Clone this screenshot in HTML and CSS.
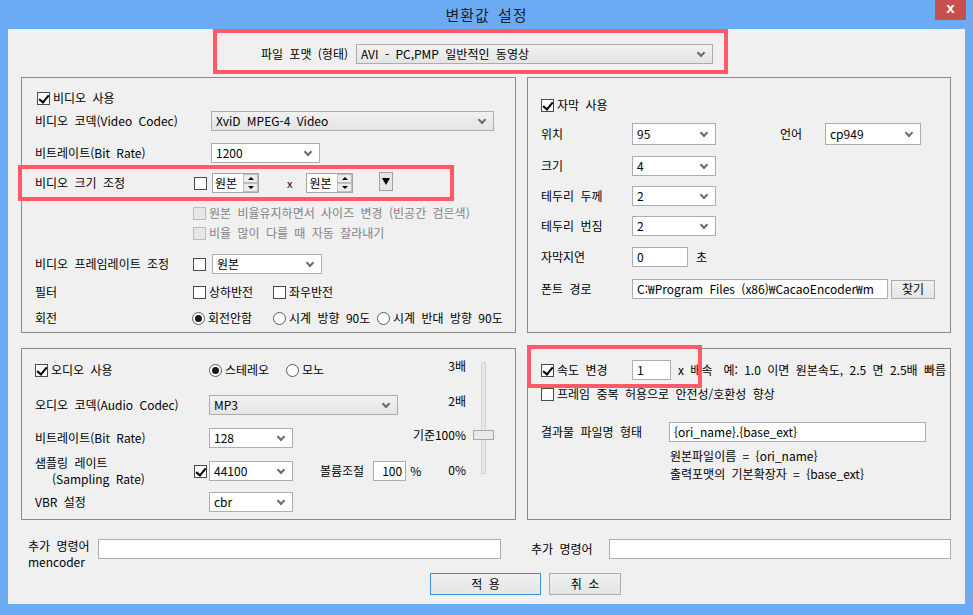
FILE: index.html
```html
<!DOCTYPE html>
<html lang="ko">
<head>
    <meta charset="UTF-8">
    <title>변환값 설정</title>
    <link rel="stylesheet" href="styles.css">
</head>
<body>

<div class="window">

    <!-- Title bar -->
    <div class="titlebar">
        <span class="title">변환값 설정</span>
        <span class="close">X</span>
    </div>

    <div class="client">

        <!-- File format -->
        <div class="format-box">
            <span>파일 포맷 (형태)</span>
            <div class="combo gray w-format">AVI - PC,PMP 일반적인 동영상</div>
        </div>

        <div class="groups">

            <!-- Video -->
            <div class="group video">
                <div class="row indent2"><span class="cb on"></span>비디오 사용</div>
                <div class="row m1">
                    <span class="lbl">비디오 코덱(Video Codec)</span>
                    <div class="combo gray ml18 w283">XviD MPEG-4 Video</div>
                </div>
                <div class="row m10">
                    <span class="lbl">비트레이트(Bit Rate)</span>
                    <div class="combo ml18 w109">1200</div>
                </div>
                <div class="row m8">
                    <span class="lbl">비디오 크기 조정</span>
                    <span class="cb ml1 mr5"></span>
                    <div class="spin"><span class="val">원본</span><span class="spin-btns"><i class="up"></i><i class="down"></i></span></div>
                    <span class="times">x</span>
                    <div class="spin"><span class="val">원본</span><span class="spin-btns"><i class="up"></i><i class="down"></i></span></div>
                    <span class="drop-btn"></span>
                </div>
                <div class="row short m9 disabled"><span class="cb dis"></span>원본 비율유지하면서 사이즈 변경 (빈공간 검은색)</div>
                <div class="row short disabled"><span class="cb dis"></span>비율 많이 다를 때 자동 잘라내기</div>
                <div class="row m10">
                    <span class="lbl">비디오 프레임레이트 조정</span>
                    <span class="cb mr6"></span>
                    <div class="combo w110">원본</div>
                </div>
                <div class="row m6">
                    <span class="lbl">필터</span>
                    <span class="opt w80"><span class="cb"></span>상하반전</span>
                    <span class="opt"><span class="cb"></span>좌우반전</span>
                </div>
                <div class="row m4">
                    <span class="lbl narrow">회전</span>
                    <span class="opt w81"><span class="radio on"></span>회전안함</span>
                    <span class="opt w104"><span class="radio"></span>시계 방향 90도</span>
                    <span class="opt"><span class="radio"></span>시계 반대 방향 90도</span>
                </div>
                <div class="mark mark-size"></div>
            </div>

            <!-- Subtitle -->
            <div class="group subtitle">
                <div class="row"><span class="cb on"></span>자막 사용</div>
                <div class="row m7">
                    <span class="lbl">위치</span>
                    <div class="combo tall w84">95</div>
                    <span class="lbl lang">언어</span>
                    <div class="combo tall w96">cp949</div>
                </div>
                <div class="row m10">
                    <span class="lbl">크기</span>
                    <div class="combo w84">4</div>
                </div>
                <div class="row m8">
                    <span class="lbl">테두리 두께</span>
                    <div class="combo w84">2</div>
                </div>
                <div class="row m8">
                    <span class="lbl">테두리 번짐</span>
                    <div class="combo w84">2</div>
                </div>
                <div class="row m9">
                    <span class="lbl">자막지연</span>
                    <div class="input w56">0</div>
                    <span class="ml8">초</span>
                </div>
                <div class="row m10">
                    <span class="lbl">폰트 경로</span>
                    <div class="input w256">C:₩Program Files (x86)₩CacaoEncoder₩m</div>
                    <div class="btn find">찾기</div>
                </div>
            </div>

            <!-- Audio -->
            <div class="group audio">
                <div class="audio-main">
                    <div class="row">
                        <span class="opt w174"><span class="cb on"></span>오디오 사용</span>
                        <span class="opt w77"><span class="radio on"></span>스테레오</span>
                        <span class="opt"><span class="radio"></span>모노</span>
                    </div>
                    <div class="row m13">
                        <span class="lbl">오디오 코덱(Audio Codec)</span>
                        <div class="combo gray w189">MP3</div>
                    </div>
                    <div class="row m11">
                        <span class="lbl">비트레이트(Bit Rate)</span>
                        <div class="combo w84">128</div>
                    </div>
                    <div class="row tall-row m6">
                        <span class="lbl two-line">샘플링 레이트<br><span class="sub">(Sampling Rate)</span></span>
                        <span class="cb on mr2"></span>
                        <div class="combo w84">44100</div>
                        <span class="vol-lbl">볼륨조절</span>
                        <div class="input w33 num">100</div>
                        <span class="ml4">%</span>
                    </div>
                    <div class="row m4">
                        <span class="lbl">VBR 설정</span>
                        <div class="combo w84">cbr</div>
                    </div>
                </div>
                <div class="vol">
                    <div class="ticks">
                        <span>3배</span>
                        <span>2배</span>
                        <span>기준100%</span>
                        <span>0%</span>
                    </div>
                    <div class="track">
                        <span class="groove"></span>
                        <span class="thumb"></span>
                    </div>
                </div>
            </div>

            <!-- Speed / output name -->
            <div class="group speed">
                <div class="row">
                    <span class="opt w91"><span class="cb on"></span>속도 변경</span>
                    <div class="input w39">1</div>
                    <span class="ml7">x 배속</span>
                    <span class="ml11">예: 1.0 이면 원본속도, 2.5 면 2.5배 빠름</span>
                </div>
                <div class="row m2"><span class="cb"></span>프레임 중복 허용으로 안전성/호환성 향상</div>
                <div class="row m16">
                    <span class="lbl">결과물 파일명 형태</span>
                    <div class="input w257">{ori_name}.{base_ext}</div>
                </div>
                <div class="info">
                    원본파일이름 = {ori_name}<br>
                    출력포맷의 기본확장자 = {base_ext}
                </div>
                <div class="mark mark-speed"></div>
            </div>
        </div>

        <!-- Extra commands -->
        <div class="extra">
            <div class="extra-lbl">추가 명령어<br>mencoder</div>
            <div class="input w403"></div>
            <div class="extra-lbl2">추가 명령어</div>
            <div class="input w342"></div>
        </div>

        <div class="buttons">
            <div class="btn ok">적 용</div>
            <div class="btn cancel">취 소</div>
        </div>
    </div>
</div>

</body>
</html>
```

FILE: styles.css
```css
* { margin: 0; padding: 0; box-sizing: border-box; }
body {
    width: 973px;
    height: 615px;
    overflow: hidden;
    background: #6aabf4;
    font-family: "Noto Sans CJK KR", "Noto Sans", sans-serif;
    font-size: 12px;
    line-height: 14px;
    word-spacing: 3px;
    color: #000;
}

/* Window frame */
.titlebar {
    position: relative;
    height: 29px;
    display: flex;
    justify-content: center;
    align-items: center;
}
.title { font-size: 15px; color: #1e1e1e; letter-spacing: 1px; }
.close {
    position: absolute;
    right: 7px; top: 0;
    width: 31px; height: 20px;
    background: #c7504f;
    color: #fff;
    font-family: "DejaVu Sans", sans-serif;
    font-weight: bold;
    font-size: 11px;
    display: flex;
    justify-content: center;
    align-items: center;
}
.client {
    margin: 0 8px;
    height: 575px;
    background: #f0f0f0;
}

/* File format */
.format-box {
    width: 515px; height: 45px;
    margin-left: 205px;
    border: 4px solid #ff5a65;
    padding: 4px 11px 0 0;
    display: flex;
    justify-content: flex-end;
    align-items: center;
    gap: 8px;
}
.w-format { width: 357px; height: 21px; }

/* Groups */
.groups {
    display: grid;
    grid-template-columns: 495px 424px;
    grid-template-rows: 256px 172px;
    column-gap: 11px;
    row-gap: 15px;
    margin: 3px 0 0 13px;
}
.group {
    position: relative;
    border: 1px solid #8a8a8a;
    padding-left: 13px;
    white-space: nowrap;
}
.video { padding-top: 9px; }
.subtitle { padding-top: 16px; }
.audio { padding-top: 10px; padding-right: 21px; display: flex; }
.speed { padding-top: 10px; }

.video .lbl { width: 158px; }
.video .lbl.narrow { width: 157px; }
.subtitle .lbl { width: 91px; }
.subtitle .lbl.lang { width: 45px; margin-left: 64px; }
.audio .lbl { width: 174px; }
.audio .lbl.two-line { width: 159px; line-height: 16px; }
.speed .lbl { width: 128px; }

.row {
    display: flex;
    align-items: center;
    height: 22px;
}
.row > * { flex-shrink: 0; }
.row.short { height: 20px; padding-left: 158px; }
.row.tall-row { height: 32px; }
.indent2 { padding-left: 2px; }
.disabled { color: #838383; }

.m1 { margin-top: 1px; }
.m2 { margin-top: 2px; }
.m4 { margin-top: 4px; }
.m6 { margin-top: 6px; }
.m7 { margin-top: 7px; }
.m8 { margin-top: 8px; }
.m9 { margin-top: 9px; }
.m10 { margin-top: 10px; }
.m11 { margin-top: 11px; }
.m13 { margin-top: 13px; }
.m16 { margin-top: 16px; }
.ml1 { margin-left: 1px; }
.ml4 { margin-left: 4px; }
.ml7 { margin-left: 7px; }
.ml8 { margin-left: 8px; }
.ml11 { margin-left: 11px; }
.ml18 { margin-left: 18px; }
.mr2 { margin-right: 2px !important; }
.mr5 { margin-right: 5px !important; }
.mr6 { margin-right: 6px !important; }

.opt { display: flex; align-items: center; flex: none; }
.w33 { width: 33px; }
.w39 { width: 39px; }
.w56 { width: 56px; }
.w77 { width: 77px; }
.w80 { width: 80px; }
.w81 { width: 81px; }
.w84 { width: 84px; }
.w91 { width: 91px; }
.w96 { width: 96px; }
.w104 { width: 104px; }
.w109 { width: 109px; }
.w110 { width: 110px; }
.w174 { width: 174px; }
.w189 { width: 189px; }
.w256 { width: 256px; }
.w257 { width: 257px; }
.w283 { width: 283px; }
.w342 { width: 342px; }
.w403 { width: 403px; }

/* Checkbox / radio */
.cb {
    position: relative;
    flex: none;
    width: 13px; height: 13px;
    margin-right: 3px;
    border: 1px solid #4a4a4a;
    background: #fff;
}
.cb.on::after {
    content: "";
    position: absolute;
    left: 3px; top: 0;
    width: 4px; height: 8px;
    border-right: 2px solid #000;
    border-bottom: 2px solid #000;
    transform: rotate(40deg);
}
.cb.dis { background: #e6e6e6; border-color: #bcbcbc; }
.radio {
    position: relative;
    flex: none;
    width: 13px; height: 13px;
    margin-right: 3px;
    border: 1px solid #5a5a5a;
    border-radius: 50%;
    background: #fff;
}
.radio.on::after {
    content: "";
    position: absolute;
    left: 2px; top: 2px;
    width: 7px; height: 7px;
    border-radius: 50%;
    background: #1a1a1a;
}

/* Combo / input */
.combo, .input {
    position: relative;
    flex: none;
    height: 20px;
    padding-left: 4px;
    border: 1px solid #abadb3;
    background: #fff;
    display: flex;
    align-items: center;
    overflow: hidden;
}
.combo.tall { height: 22px; }
.combo::after {
    content: "";
    position: absolute;
    right: 8px; top: 5px;
    width: 4px; height: 4px;
    border-right: 2px solid #6b6b6b;
    border-bottom: 2px solid #6b6b6b;
    transform: rotate(45deg);
}
.combo.tall::after { top: 6px; }
.combo.gray {
    background: linear-gradient(#f2f2f2, #e4e4e4);
    border-color: #acacac;
}
.input.num { justify-content: flex-end; padding: 0 3px 0 0; }

/* Spin box */
.spin {
    flex: none;
    width: 47px; height: 20px;
    padding-left: 2px;
    border: 1px solid #a5a5a5;
    background: #fff;
    display: flex;
    align-items: center;
}
.spin .val { flex: 1; }
.spin-btns {
    width: 15px; height: 18px;
    display: flex;
    flex-direction: column;
}
.spin-btns i {
    flex: 1;
    display: flex;
    justify-content: center;
    align-items: center;
    background: #ececec;
    border: 1px solid #bdbdbd;
}
.spin-btns i::after {
    content: "";
    border-left: 3px solid transparent;
    border-right: 3px solid transparent;
    border-bottom: 3px solid #000;
}
.spin-btns i.down::after { border-bottom: 0; border-top: 3px solid #000; }
.times { margin: 0 14px 0 28px; font-size: 11px; }
.drop-btn {
    width: 14px; height: 19px;
    margin: -3px 0 0 26px;
    border: 1px solid #a0a0a0;
    background: #e6e6e6;
    display: flex;
    justify-content: center;
    align-items: center;
}
.drop-btn::after {
    content: "";
    border-left: 4px solid transparent;
    border-right: 4px solid transparent;
    border-top: 7px solid #000;
}

/* Buttons */
.btn {
    height: 22px;
    border: 1px solid #acacac;
    background: linear-gradient(#f0f0f0, #e5e5e5);
    display: flex;
    justify-content: center;
    align-items: center;
}
.btn.find { width: 44px; height: 19px; margin-left: 3px; }
.btn.ok { width: 111px; border-color: #3c8fe8; }
.btn.cancel { width: 72px; }

/* Audio */
.audio-main { flex: 1; min-width: 0; }
.two-line .sub { padding-left: 17px; }
.vol-lbl { margin: 0 9px 0 27px; }
.vol { display: flex; flex: none; }
.ticks {
    width: 60px;
    height: 118px;
    display: flex;
    flex-direction: column;
    justify-content: space-between;
    align-items: flex-end;
}
.track {
    position: relative;
    width: 21px;
    height: 112px;
    margin: 3px 0 0 7px;
}
.groove {
    display: block;
    width: 5px; height: 100%;
    margin-left: 8px;
    background: #e7e7e7;
    border: 1px solid #d6d6d6;
}
.thumb {
    position: absolute;
    left: 0; top: 68px;
    width: 21px; height: 10px;
    background: #e9e9e9;
    border: 1px solid #a6a6a6;
}

/* Speed */
.info { margin-top: 4px; padding-left: 129px; line-height: 18px; }

/* Red annotation boxes */
.mark {
    position: absolute;
    border: 4px solid #ff5a65;
}
.mark-size { left: -4px; top: 87px; width: 436px; height: 36px; }
.mark-speed { left: -1px; top: -4px; width: 175px; height: 43px; }

/* Extra commands */
.extra {
    height: 20px;
    margin-top: 19px;
    padding-left: 20px;
    display: flex;
    align-items: center;
}
.extra-lbl { width: 70px; align-self: flex-start; line-height: 16px; margin-top: -1px; }
.extra-lbl2 { width: 78px; margin-left: 30px; }

.buttons {
    margin-top: 14px;
    padding-left: 422px;
    display: flex;
    gap: 8px;
}
```
